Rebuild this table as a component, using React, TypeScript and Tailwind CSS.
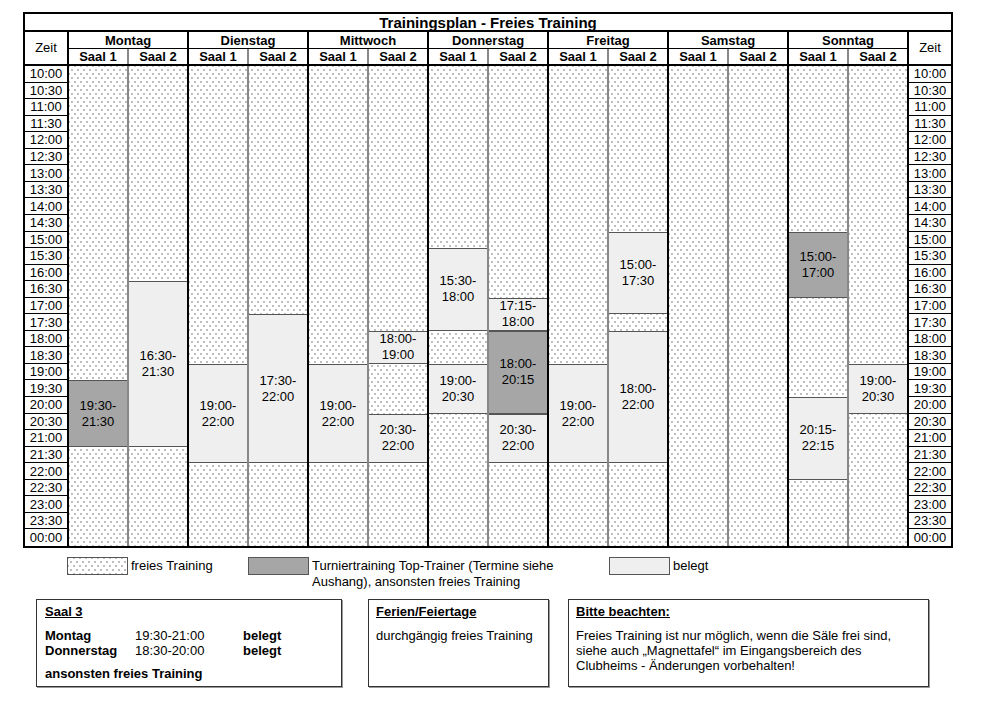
import React from 'react';

type Kind = 'busy' | 'top';
type Block = { from: number; to: number; kind: Kind; a: string; b: string };

// Zeilenindex: 10:00 = 0, jede Zeile = 30 Minuten, 00:00 = 28
const times = [
  '10:00', '10:30', '11:00', '11:30', '12:00', '12:30', '13:00', '13:30', '14:00', '14:30',
  '15:00', '15:30', '16:00', '16:30', '17:00', '17:30', '18:00', '18:30', '19:00', '19:30',
  '20:00', '20:30', '21:00', '21:30', '22:00', '22:30', '23:00', '23:30', '00:00',
];

const days: { name: string; saal1: Block[]; saal2: Block[] }[] = [
  {
    name: 'Montag',
    saal1: [{ from: 19, to: 23, kind: 'top', a: '19:30-', b: '21:30' }],
    saal2: [{ from: 13, to: 23, kind: 'busy', a: '16:30-', b: '21:30' }],
  },
  {
    name: 'Dienstag',
    saal1: [{ from: 18, to: 24, kind: 'busy', a: '19:00-', b: '22:00' }],
    saal2: [{ from: 15, to: 24, kind: 'busy', a: '17:30-', b: '22:00' }],
  },
  {
    name: 'Mittwoch',
    saal1: [{ from: 18, to: 24, kind: 'busy', a: '19:00-', b: '22:00' }],
    saal2: [
      { from: 16, to: 18, kind: 'busy', a: '18:00-', b: '19:00' },
      { from: 21, to: 24, kind: 'busy', a: '20:30-', b: '22:00' },
    ],
  },
  {
    name: 'Donnerstag',
    saal1: [
      { from: 11, to: 16, kind: 'busy', a: '15:30-', b: '18:00' },
      { from: 18, to: 21, kind: 'busy', a: '19:00-', b: '20:30' },
    ],
    saal2: [
      { from: 14, to: 16, kind: 'busy', a: '17:15-', b: '18:00' },
      { from: 16, to: 21, kind: 'top', a: '18:00-', b: '20:15' },
      { from: 21, to: 24, kind: 'busy', a: '20:30-', b: '22:00' },
    ],
  },
  {
    name: 'Freitag',
    saal1: [{ from: 18, to: 24, kind: 'busy', a: '19:00-', b: '22:00' }],
    saal2: [
      { from: 10, to: 15, kind: 'busy', a: '15:00-', b: '17:30' },
      { from: 16, to: 24, kind: 'busy', a: '18:00-', b: '22:00' },
    ],
  },
  { name: 'Samstag', saal1: [], saal2: [] },
  {
    name: 'Sonntag',
    saal1: [
      { from: 10, to: 14, kind: 'top', a: '15:00-', b: '17:00' },
      { from: 20, to: 25, kind: 'busy', a: '20:15-', b: '22:15' },
    ],
    saal2: [{ from: 18, to: 21, kind: 'busy', a: '19:00-', b: '20:30' }],
  },
];

const dots =
  'bg-white bg-[radial-gradient(circle,#8a8a8a_0.55px,transparent_0.9px),radial-gradient(circle,#8a8a8a_0.55px,transparent_0.9px)] bg-[length:6px_8px] bg-[position:0_0,3px_4px]';

function SaalColumn({ blocks, className }: { blocks: Block[]; className: string }) {
  return (
    <div className={`grid grid-rows-[repeat(29,minmax(0,1fr))] h-full ${dots} ${className}`}>
      {blocks.map((bl) => (
        <div
          key={bl.from}
          style={{ gridRow: `${bl.from + 1} / ${bl.to + 1}` }}
          className={`flex flex-col items-center justify-center border-y border-[#555] text-[13px] leading-[16px] ${
            bl.kind === 'top' ? 'bg-[#a6a6a6]' : 'bg-[#efefef]'
          }`}
        >
          <span>{bl.a}</span>
          <span>{bl.b}</span>
        </div>
      ))}
    </div>
  );
}

function TimeColumn({ className }: { className: string }) {
  return (
    <div className={`grid grid-rows-[repeat(29,minmax(0,1fr))] h-full ${className}`}>
      {times.map((t, i) => (
        <div
          key={t}
          className={`flex items-center justify-center text-[13px] leading-none ${
            i < times.length - 1 ? 'border-b border-black' : ''
          }`}
        >
          {t}
        </div>
      ))}
    </div>
  );
}

export default function App() {
  return (
    <div className="w-[1000px] h-[707px] bg-white text-black font-['Liberation_Sans',Arial,sans-serif] pt-[12px]">
      {/* Plan */}
      <div className="ml-[23px] w-[930px] border-2 border-black">
        <div className="h-[18px] border-b-2 border-black flex items-center justify-center text-[15px] font-bold leading-none">
          Trainingsplan - Freies Training
        </div>

        {/* Kopfzeilen */}
        <div className="flex h-[34px] border-b-2 border-black">
          <div className="w-[44px] border-r-2 border-black flex items-center justify-center text-[13px]">Zeit</div>
          {days.map((d) => (
            <div key={d.name} className="w-[120px] border-r-2 border-black flex flex-col">
              <div className="h-[17px] border-b border-black flex items-center justify-center text-[13px] font-bold leading-none">
                {d.name}
              </div>
              <div className="flex-1 flex text-[13px] font-bold leading-none">
                <div className="w-[60px] border-r-2 border-[#888] flex items-center justify-center">Saal 1</div>
                <div className="flex-1 flex items-center justify-center">Saal 2</div>
              </div>
            </div>
          ))}
          <div className="flex-1 flex items-center justify-center text-[13px]">Zeit</div>
        </div>

        {/* Zeitraster */}
        <div className="flex h-[480px]">
          <TimeColumn className="w-[44px] border-r-2 border-black" />
          {days.map((d) => (
            <div key={d.name} className="w-[120px] border-r-2 border-black flex">
              <SaalColumn blocks={d.saal1} className="w-[60px] border-r-2 border-[#888]" />
              <SaalColumn blocks={d.saal2} className="flex-1" />
            </div>
          ))}
          <TimeColumn className="flex-1" />
        </div>
      </div>

      {/* Legende */}
      <div className="flex mt-[9px] pl-[67px] h-[34px] text-[13px] leading-[16px]">
        <div className="w-[181px] flex">
          <div className={`w-[61px] h-[18px] border border-[#555] ${dots}`} />
          <span className="ml-[3px] pt-[1px]">freies Training</span>
        </div>
        <div className="w-[361px] flex">
          <div className="w-[61px] h-[18px] border border-[#555] bg-[#a6a6a6] shrink-0" />
          <span className="ml-[3px] pt-[1px] w-[260px]">
            Turniertraining Top-Trainer (Termine siehe
            <br />
            Aushang), ansonsten freies Training
          </span>
        </div>
        <div className="flex">
          <div className="w-[61px] h-[18px] border border-[#555] bg-[#efefef]" />
          <span className="ml-[3px] pt-[1px]">belegt</span>
        </div>
      </div>

      {/* Hinweise */}
      <div className="flex mt-[8px] pl-[36px] text-[13px] leading-[15px]">
        <div className="w-[306px] h-[88px] border border-[#333] shadow-[1px_1px_0_#999] pl-[8px] pt-[4px]">
          <div className="font-bold underline">Saal 3</div>
          <div className="mt-[9px] flex">
            <span className="w-[90px] font-bold">Montag</span>
            <span className="w-[108px]">19:30-21:00</span>
            <span className="font-bold">belegt</span>
          </div>
          <div className="flex">
            <span className="w-[90px] font-bold">Donnerstag</span>
            <span className="w-[108px]">18:30-20:00</span>
            <span className="font-bold">belegt</span>
          </div>
          <div className="mt-[8px] font-bold">ansonsten freies Training</div>
        </div>

        <div className="ml-[26px] w-[181px] h-[88px] border border-[#333] shadow-[1px_1px_0_#999] pl-[7px] pt-[4px]">
          <div className="font-bold underline">Ferien/Feiertage</div>
          <div className="mt-[9px]">durchgängig freies Training</div>
        </div>

        <div className="ml-[19px] w-[361px] h-[88px] border border-[#333] shadow-[1px_1px_0_#999] pl-[7px] pt-[4px]">
          <div className="font-bold underline">Bitte beachten:</div>
          <div className="mt-[9px]">
            Freies Training ist nur möglich, wenn die Säle frei sind,
            <br />
            siehe auch „Magnettafel“ im Eingangsbereich des
            <br />
            Clubheims - Änderungen vorbehalten!
          </div>
        </div>
      </div>
    </div>
  );
}
